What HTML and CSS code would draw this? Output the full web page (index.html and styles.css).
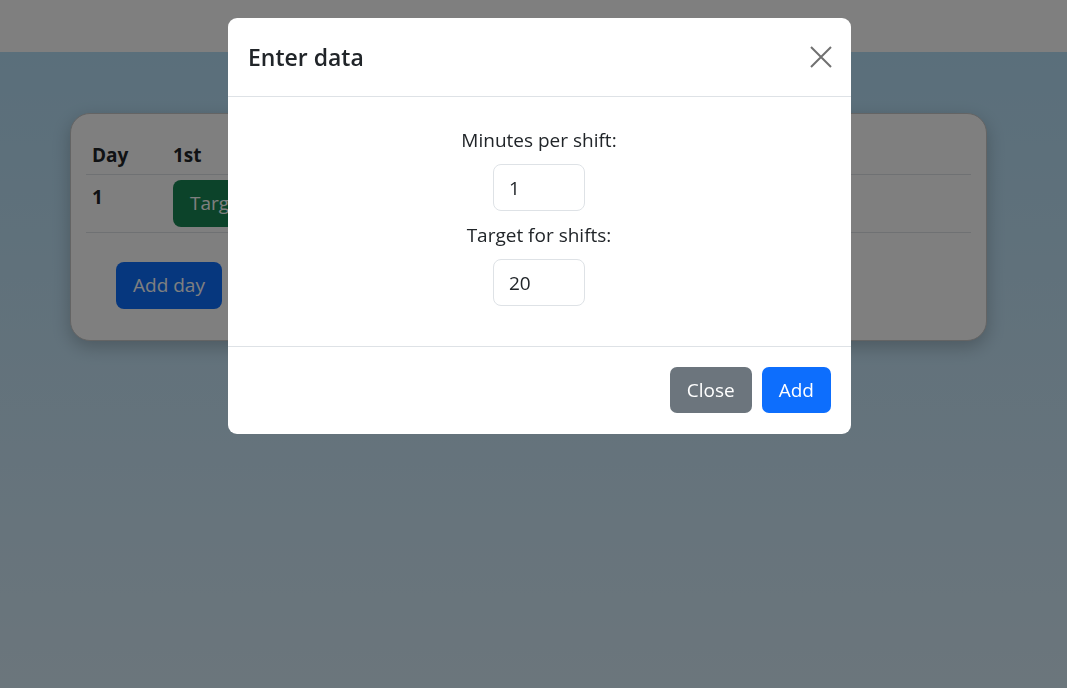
FILE: index.html
```html
<!DOCTYPE html>
<html lang="en">
<head>
<meta charset="utf-8">
<title>Shifts</title>
<link rel="stylesheet" href="styles.css">
</head>
<body>
  <nav class="navbar"></nav>
  <main class="page">
    <section class="card">
      <table class="table">
        <thead>
          <tr><th class="col-day">Day</th><th>1st</th></tr>
        </thead>
        <tbody>
          <tr>
            <td class="cell-day">1</td>
            <td class="cell-shift"><button class="btn btn-lg btn-success">Target: 20</button></td>
          </tr>
        </tbody>
      </table>
      <div class="card-actions">
        <button class="btn btn-lg btn-primary">Add day</button>
      </div>
    </section>
  </main>

  <div class="backdrop"></div>

  <div class="modal">
    <div class="modal-dialog">
      <div class="modal-header">
        <h4 class="modal-title">Enter data</h4>
        <button class="btn-close" aria-label="Close">
          <svg width="22" height="22" viewBox="0 0 22 22"><path d="M1 1 L21 21 M21 1 L1 21" stroke="#707070" stroke-width="2" fill="none"/></svg>
        </button>
      </div>
      <div class="modal-body">
        <label class="field-label">Minutes per shift:</label>
        <input class="field-input" type="text" value="1">
        <label class="field-label">Target for shifts:</label>
        <input class="field-input" type="text" value="20">
      </div>
      <div class="modal-footer">
        <button class="btn btn-secondary">Close</button>
        <button class="btn btn-primary">Add</button>
      </div>
    </div>
  </div>
</body>
</html>
```
FILE: styles.css
```css
* { box-sizing: border-box; }

html {
  background: linear-gradient(to bottom, #b3ddf5 0px, #b5def6 52px, #d7ecf9 688px);
  min-height: 100%;
}

body {
  margin: 0;
  min-height: 100vh;
  font-family: "Open Sans", "Liberation Sans", sans-serif;
  font-size: 19px;
  color: #212529;
}

.navbar {
  height: 52px;
  background: #ffffff;
}

.page {
  padding: 61px 0 0 70px;
}

.card {
  width: 917px;
  height: 228px;
  background: #ffffff;
  border: 1px solid #c8c8c8;
  border-radius: 20px;
  padding: 15px;
  box-shadow: 0 6px 18px rgba(0, 0, 0, 0.22);
}

.table {
  width: 100%;
  border-collapse: collapse;
}

.table th {
  text-align: left;
  font-weight: 700;
  line-height: 29px;
  padding: 12px 6px 4px;
  border-bottom: 1px solid #dee2e6;
}

.table .col-day { width: 81px; }

.table td {
  vertical-align: top;
  line-height: 29px;
  padding: 5px 6px;
  border-bottom: 1px solid #dee2e6;
}

.table .cell-day {
  font-weight: 700;
  padding-top: 8px;
}

.card-actions {
  padding: 29px 0 0 30px;
}

.btn {
  font-family: inherit;
  font-size: 19px;
  line-height: 28px;
  padding: 8px 16px;
  border: 1px solid transparent;
  border-radius: 7px;
  color: #ffffff;
  cursor: pointer;
}

.btn-lg {
  line-height: 29px;
  border-radius: 8px;
}

.btn-success { background: #198754; }
.btn-primary { background: #0d6efd; }
.btn-secondary { background: #6c757d; }

.backdrop {
  position: fixed;
  inset: 0;
  background: rgba(0, 0, 0, 0.5);
}

.modal {
  position: fixed;
  inset: 0;
  padding: 18px 0 0 228px;
}

.modal-dialog {
  width: 623px;
  background: #ffffff;
  border-radius: 9px;
  overflow: hidden;
}

.modal-header {
  display: flex;
  align-items: center;
  justify-content: space-between;
  padding: 25px 19px 24px 20px;
  border-bottom: 1px solid #dee2e6;
}

.modal-title {
  margin: 0;
  font-size: 23px;
  font-weight: 600;
  line-height: 29px;
}

.btn-close {
  display: flex;
  padding: 0;
  border: 0;
  background: none;
  width: 22px;
  height: 22px;
  margin-top: -2px;
}

.modal-body {
  display: flex;
  flex-direction: column;
  align-items: center;
  padding: 29px 20px 40px 19px;
}

.field-label {
  display: block;
  line-height: 29px;
  font-size: 19px;
}

.field-input {
  width: 92px;
  height: 47px;
  margin: 9px 0 10px;
  padding: 0 15px;
  font-family: inherit;
  font-size: 19px;
  color: #212529;
  border: 1px solid #dee2e6;
  border-radius: 8px;
  background: #ffffff;
}

.field-input:last-child { margin-bottom: 0; }

.modal-footer {
  display: flex;
  justify-content: flex-end;
  gap: 10px;
  padding: 20px 20px 21px;
  border-top: 1px solid #dee2e6;
}
```
